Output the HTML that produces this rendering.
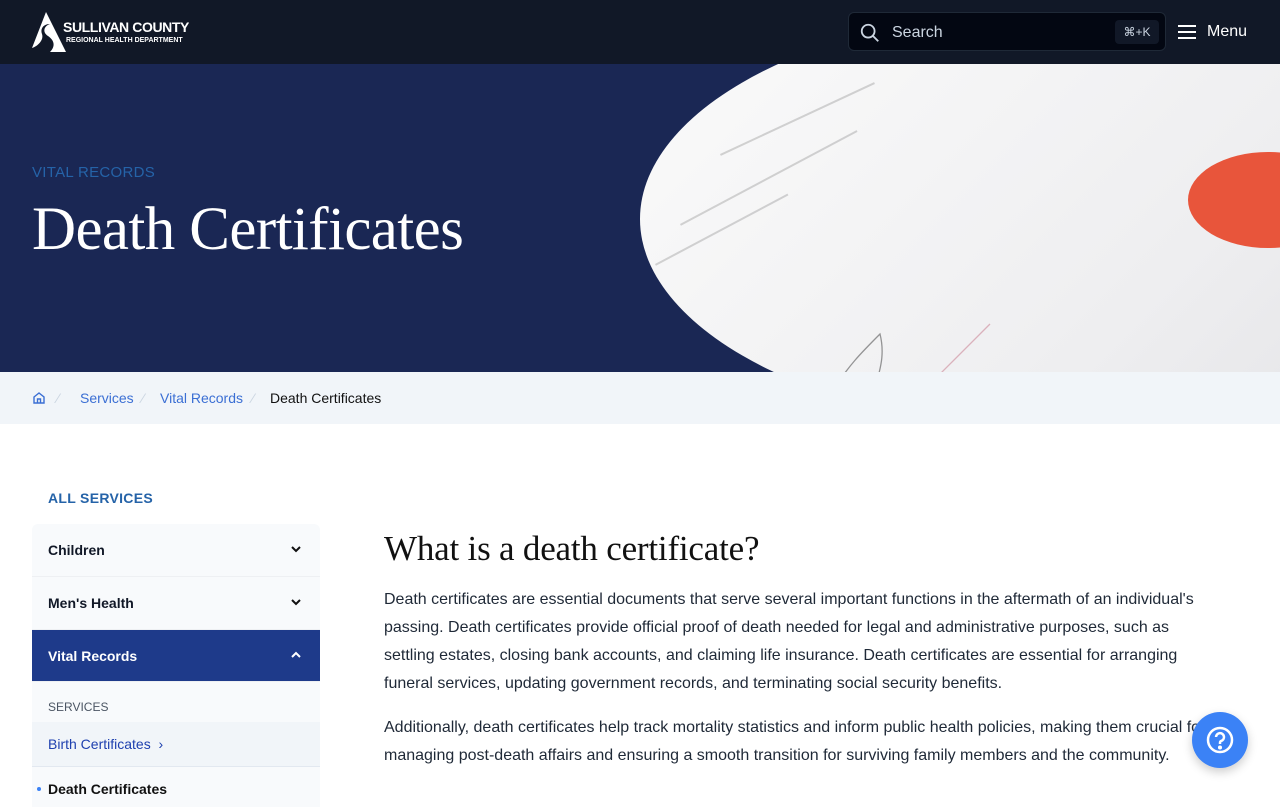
<!DOCTYPE html>
<html><head><meta charset="utf-8"><style>
*{box-sizing:border-box;margin:0;padding:0}
body{width:1280px;height:800px;overflow:hidden;background:#fff;font-family:"Liberation Sans",sans-serif;color:#1f2937}
.top{position:absolute;left:0;top:0;width:1280px;height:64px;background:#111827}
.hero{position:absolute;left:0;top:64px;width:1280px;height:308px;background:#1a2754;overflow:hidden}
.img{position:absolute;left:640px;top:-60px;width:900px;height:430px;border-radius:50% 0 0 50%/50% 0 0 50%;background:linear-gradient(135deg,#fbfbfb,#eeeef0 60%,#e0e0e3);overflow:hidden}
.seal{position:absolute;left:548px;top:148px;width:160px;height:96px;border-radius:50%;background:#e8553b}
.bc{position:absolute;left:0;top:372px;width:1280px;height:52px;background:#f1f5f9;font-size:14px}
.bc span{position:absolute;top:18px}
.side{position:absolute;left:32px;width:288px}
.item{height:53px;background:#f8fafc;border-bottom:1px solid #eef0f3;font-weight:bold;font-size:14px;padding:18px 16px;position:relative;color:#111827}
.item svg{position:absolute;right:18px;top:21px}
p{font-size:16px;line-height:28px;color:#1f2937}
</style></head><body>
<div class="top">
 <svg style="position:absolute;left:32px;top:12px" width="34" height="40" viewBox="0 0 34 40"><path d="M14 0 L34 40 L18 40 C24 34 22 28 16 24 C10 20 12 14 18 12 C12 12 8 16 10 22 C12 28 6 34 0 36 Z" fill="#fff"/></svg>
 <div style="position:absolute;left:63px;top:19px;color:#fff;font-weight:bold;font-size:14px;letter-spacing:-.4px">SULLIVAN COUNTY</div>
 <div style="position:absolute;left:66px;top:37px;color:#fff;font-weight:bold;font-size:7px">REGIONAL HEALTH DEPARTMENT</div>
 <div style="position:absolute;left:848px;top:12px;width:318px;height:39px;background:#030712;border:1px solid #1f2937;border-radius:6px">
  <svg style="position:absolute;left:10px;top:9px" width="22" height="22" viewBox="0 0 24 24" fill="none" stroke="#cbd5e1" stroke-width="2"><circle cx="10" cy="10" r="7"/><path d="M15 15l6 6"/></svg>
  <span style="position:absolute;left:43px;top:11px;color:#cbd5e1;font-size:16px">Search</span>
  <span style="position:absolute;left:266px;top:7px;width:44px;height:24px;background:#111827;border-radius:4px;color:#cbd5e1;font-size:12px;text-align:center;line-height:24px">⌘+K</span>
 </div>
 <svg style="position:absolute;left:1178px;top:24px" width="18" height="16" viewBox="0 0 18 16" stroke="#fff" stroke-width="2"><path d="M0 2h18M0 8h18M0 14h18"/></svg>
 <span style="position:absolute;left:1207px;top:23px;color:#fff;font-size:16px">Menu</span>
</div>
<div class="hero">
 <div style="position:absolute;left:32px;top:100px;color:#2563a8;font-size:15px;letter-spacing:.3px">VITAL RECORDS</div>
 <div style="position:absolute;left:32px;top:131px;color:#fff;font-family:'Liberation Serif',serif;font-size:61px;letter-spacing:-.6px">Death Certificates</div>
 <div class="img"><div class="seal"></div>
  <svg style="position:absolute;left:0;top:60px" width="640" height="370"><g stroke="#555" fill="none" stroke-width="1.3" opacity=".6"><path d="M130 360c30-40 40 0 60-30s30-40 50-60c10 40 -20 60 10 60"/><path d="M290 320l60-60" stroke="#c89"/><path d="M390 350c20-20 30-10 50-30"/></g><g fill="#888" opacity=".35"><rect x="80" y="90" width="170" height="2" transform="rotate(-25 80 90)"/><rect x="40" y="160" width="200" height="2" transform="rotate(-28 40 160)"/><rect x="15" y="200" width="150" height="2" transform="rotate(-28 15 200)"/></g></svg>
 </div>
</div>
<div class="bc">
 <svg style="position:absolute;left:32px;top:19px" width="14" height="14" viewBox="0 0 14 14" fill="none" stroke="#3b6fd4" stroke-width="1.4"><path d="M2 6l5-4 5 4v6H2z M5.5 12V8h3v4"/></svg>
 <span style="left:57px;color:#cbd5e1">⁄</span><span style="left:80px;color:#3b6fd4">Services</span>
 <span style="left:142px;color:#cbd5e1">⁄</span><span style="left:160px;color:#3b6fd4">Vital Records</span>
 <span style="left:252px;color:#cbd5e1">⁄</span><span style="left:270px;color:#111">Death Certificates</span>
</div>
<div style="position:absolute;left:48px;top:490px;color:#2563a8;font-weight:bold;font-size:14px;letter-spacing:.3px">ALL SERVICES</div>
<div class="side" style="top:524px">
 <div class="item" style="border-radius:6px 6px 0 0">Children<svg width="12" height="8" viewBox="0 0 12 8" fill="none" stroke="#111" stroke-width="2"><path d="M2 2l4 4 4-4"/></svg></div>
 <div class="item">Men's Health<svg width="12" height="8" viewBox="0 0 12 8" fill="none" stroke="#111" stroke-width="2"><path d="M2 2l4 4 4-4"/></svg></div>
 <div class="item" style="background:#1e3a8a;color:#fff;height:52px">Vital Records<svg width="12" height="8" viewBox="0 0 12 8" fill="none" stroke="#fff" stroke-width="2"><path d="M2 6l4-4 4 4"/></svg></div>
 <div style="height:40px;background:#f8fafc;font-size:12px;color:#4b5563;padding:18px 16px 0">SERVICES</div>
 <div style="height:45px;background:#f1f5f9;border-bottom:1px solid #e2e8f0;font-size:14px;color:#1e40af;padding:14px 16px">Birth Certificates &nbsp;›</div>
 <div style="height:40px;background:#f8fafc;font-size:14px;font-weight:bold;color:#111;padding:14px 16px;position:relative"><span style="position:absolute;left:5px;top:20px;width:4px;height:4px;border-radius:50%;background:#3b82f6"></span>Death Certificates</div>
</div>
<div style="position:absolute;left:384px;top:529px;font-family:'Liberation Serif',serif;font-size:35px;color:#111;letter-spacing:-.2px">What is a death certificate?</div>
<div style="position:absolute;left:384px;top:586px;width:830px">
 <p>Death certificates are essential documents that serve several important functions in the aftermath of an individual's passing. Death certificates provide official proof of death needed for legal and administrative purposes, such as settling estates, closing bank accounts, and claiming life insurance. Death certificates are essential for arranging funeral services, updating government records, and terminating social security benefits.</p>
 <p style="margin-top:16px;white-space:nowrap">Additionally, death certificates help track mortality statistics and inform public health policies, making them crucial for<br>managing post-death affairs and ensuring a smooth transition for surviving family members and the community.</p>
</div>
<div style="position:absolute;left:1192px;top:712px;width:56px;height:56px;border-radius:50%;background:#3b82f6;box-shadow:0 4px 10px rgba(0,0,0,.2)">
 <svg style="position:absolute;left:13px;top:13px" width="30" height="30" viewBox="0 0 30 30" fill="none" stroke="#fff" stroke-width="2.5"><circle cx="15" cy="15" r="12"/><path d="M11 12a4 4 0 1 1 5 4c-1 .5-1 1-1 3"/><circle cx="15" cy="22.5" r=".8" fill="#fff"/></svg>
</div>
</body></html>
